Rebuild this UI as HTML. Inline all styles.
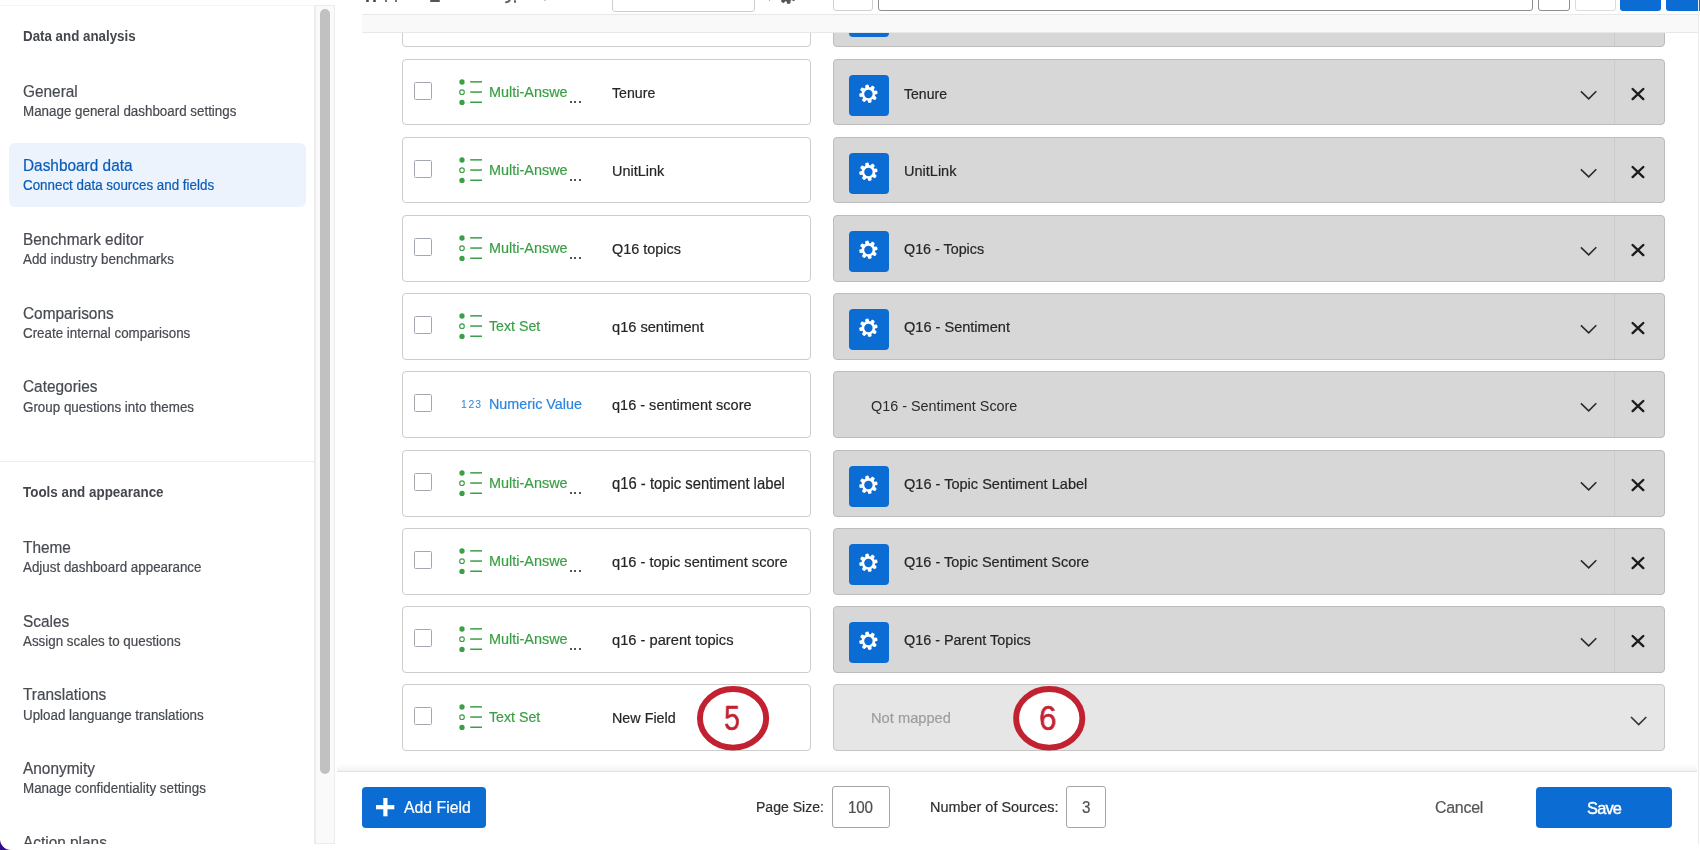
<!DOCTYPE html><html><head><meta charset="utf-8"><style>
html,body{margin:0;padding:0;}
body{width:1700px;height:850px;overflow:hidden;position:relative;background:#fff;font-family:"Liberation Sans",sans-serif;}
.t{position:absolute;white-space:nowrap;will-change:transform;}
.b{position:absolute;box-sizing:border-box;}
svg{position:absolute;overflow:visible;}
</style></head><body>
<div class="b" style="left:0px;top:826px;width:30px;height:24px;background:#300c88;border-radius:0px;"></div>
<div class="b" style="left:0px;top:0px;width:1700px;height:850px;background:#ffffff;border-radius:0px;border-bottom-left-radius:11px;"></div>
<div class="b" style="left:402px;top:-20px;width:409px;height:67px;background:#fff;border:1px solid #cdcdcd;border-radius:4px;"></div>
<div class="b" style="left:414px;top:3px;width:18px;height:18px;background:#fff;border:1.6px solid #a2a7b0;border-radius:1.5px;"></div>
<svg style="left:456px;top:-1px" width="30" height="28" viewBox="0 0 30 28"><circle cx="6" cy="4" r="2.65" fill="#3a9f45"/><circle cx="6" cy="14.2" r="2.3" fill="none" stroke="#3a9f45" stroke-width="1.1"/><circle cx="6" cy="24.4" r="2.65" fill="#3a9f45"/><rect x="14.2" y="3.1" width="11.8" height="1.5" fill="#3a9f45"/><rect x="14.2" y="13.3" width="11.8" height="1.5" fill="#3a9f45"/><rect x="14.2" y="23.5" width="11.8" height="1.5" fill="#3a9f45"/></svg>
<div class="t" style="left:488.50px;top:5.77px;font-size:14.45px;line-height:14.45px;color:#3a9f45;font-weight:400;letter-spacing:0px;transform:scaleY(1.06);transform-origin:0 12.23px;-webkit-text-stroke:0.2px #3a9f45;">Multi-Answe</div>
<div class="b" style="left:569.5px;top:21.5px;width:2.0px;height:2.0px;background:#1a1a1a;border-radius:1px;"></div>
<div class="b" style="left:574.0px;top:21.5px;width:2.0px;height:2.0px;background:#1a1a1a;border-radius:1px;"></div>
<div class="b" style="left:578.5px;top:21.5px;width:2.0px;height:2.0px;background:#1a1a1a;border-radius:1px;"></div>
<div class="b" style="left:833px;top:-20px;width:832px;height:67px;background:#d7d7d7;border:1px solid #bcbcbc;border-radius:4px;"></div>
<div class="b" style="left:1614px;top:-19px;width:1px;height:65px;background:#cbcbcb;border-radius:0px;"></div>
<div class="b" style="left:849px;top:-4.5px;width:40px;height:41px;background:#0b6dd3;border-radius:4px;"></div>
<svg style="left:849px;top:-4.5px" width="40" height="40" viewBox="0 0 40 40"><path fill="#fff" fill-rule="evenodd" d="M16.36,12.83 L16.20,10.71 L16.77,9.98 L18.85,9.62 L19.64,10.10 L20.22,12.15 L20.53,12.20 L20.85,12.26 L21.16,12.34 L21.47,12.43 L22.86,10.82 L23.78,10.71 L25.51,11.92 L25.72,12.82 L24.68,14.68 L24.87,14.93 L25.05,15.20 L25.22,15.48 L25.37,15.76 L27.49,15.60 L28.22,16.17 L28.58,18.25 L28.10,19.04 L26.05,19.62 L26.00,19.93 L25.94,20.25 L25.86,20.56 L25.77,20.87 L27.38,22.26 L27.49,23.18 L26.28,24.91 L25.38,25.12 L23.52,24.08 L23.27,24.27 L23.00,24.45 L22.72,24.62 L22.44,24.77 L22.60,26.89 L22.03,27.62 L19.95,27.98 L19.16,27.50 L18.58,25.45 L18.27,25.40 L17.95,25.34 L17.64,25.26 L17.33,25.17 L15.94,26.78 L15.02,26.89 L13.29,25.68 L13.08,24.78 L14.12,22.92 L13.93,22.67 L13.75,22.40 L13.58,22.12 L13.43,21.84 L11.31,22.00 L10.58,21.43 L10.22,19.35 L10.70,18.56 L12.75,17.98 L12.80,17.67 L12.86,17.35 L12.94,17.04 L13.03,16.73 L11.42,15.34 L11.31,14.42 L12.52,12.69 L13.42,12.48 L15.28,13.52 L15.53,13.33 L15.80,13.15 L16.08,12.98 Z M23.6,19.0 A4.2,4.2 0 1 0 15.2,19.0 A4.2,4.2 0 1 0 23.6,19.0 Z"/></svg>
<div class="t" style="left:903.50px;top:7.32px;font-size:14.5px;line-height:14.5px;color:#262626;font-weight:400;letter-spacing:0px;transform:scaleY(1.06);transform-origin:0 12.28px;-webkit-text-stroke:0.2px #262626;"></div>
<svg style="left:1579px;top:11px" width="18" height="10" viewBox="0 0 18 10"><polyline points="1.9,1.4 9.7,8.8 17.3,1.2" fill="none" stroke="#2a2a2a" stroke-width="1.6"/></svg>
<svg style="left:1630px;top:8px" width="16" height="14" viewBox="0 0 16 14"><path d="M2.6,2.0 L13.3,12.1 M13.3,2.0 L2.6,12.1" stroke="#1c1c1c" stroke-width="2.4" stroke-linecap="round"/></svg>
<div class="b" style="left:402px;top:59px;width:409px;height:66px;background:#fff;border:1px solid #cdcdcd;border-radius:4px;"></div>
<div class="b" style="left:414px;top:82px;width:18px;height:18px;background:#fff;border:1.6px solid #a2a7b0;border-radius:1.5px;"></div>
<svg style="left:456px;top:78px" width="30" height="28" viewBox="0 0 30 28"><circle cx="6" cy="4" r="2.65" fill="#3a9f45"/><circle cx="6" cy="14.2" r="2.3" fill="none" stroke="#3a9f45" stroke-width="1.1"/><circle cx="6" cy="24.4" r="2.65" fill="#3a9f45"/><rect x="14.2" y="3.1" width="11.8" height="1.5" fill="#3a9f45"/><rect x="14.2" y="13.3" width="11.8" height="1.5" fill="#3a9f45"/><rect x="14.2" y="23.5" width="11.8" height="1.5" fill="#3a9f45"/></svg>
<div class="t" style="left:488.50px;top:84.77px;font-size:14.45px;line-height:14.45px;color:#3a9f45;font-weight:400;letter-spacing:0px;transform:scaleY(1.06);transform-origin:0 12.23px;-webkit-text-stroke:0.2px #3a9f45;">Multi-Answe</div>
<div class="b" style="left:569.5px;top:100.5px;width:2.0px;height:2.0px;background:#1a1a1a;border-radius:1px;"></div>
<div class="b" style="left:574.0px;top:100.5px;width:2.0px;height:2.0px;background:#1a1a1a;border-radius:1px;"></div>
<div class="b" style="left:578.5px;top:100.5px;width:2.0px;height:2.0px;background:#1a1a1a;border-radius:1px;"></div>
<div class="t" style="left:611.80px;top:86.31px;font-size:14.16px;line-height:14.16px;color:#262626;font-weight:400;letter-spacing:0px;transform:scaleY(1.06);transform-origin:0 11.99px;-webkit-text-stroke:0.2px #262626;">Tenure</div>
<div class="b" style="left:833px;top:59px;width:832px;height:66px;background:#d7d7d7;border:1px solid #bcbcbc;border-radius:4px;"></div>
<div class="b" style="left:1614px;top:60px;width:1px;height:64px;background:#cbcbcb;border-radius:0px;"></div>
<div class="b" style="left:849px;top:74.5px;width:40px;height:41px;background:#0b6dd3;border-radius:4px;"></div>
<svg style="left:849px;top:74.5px" width="40" height="40" viewBox="0 0 40 40"><path fill="#fff" fill-rule="evenodd" d="M16.36,12.83 L16.20,10.71 L16.77,9.98 L18.85,9.62 L19.64,10.10 L20.22,12.15 L20.53,12.20 L20.85,12.26 L21.16,12.34 L21.47,12.43 L22.86,10.82 L23.78,10.71 L25.51,11.92 L25.72,12.82 L24.68,14.68 L24.87,14.93 L25.05,15.20 L25.22,15.48 L25.37,15.76 L27.49,15.60 L28.22,16.17 L28.58,18.25 L28.10,19.04 L26.05,19.62 L26.00,19.93 L25.94,20.25 L25.86,20.56 L25.77,20.87 L27.38,22.26 L27.49,23.18 L26.28,24.91 L25.38,25.12 L23.52,24.08 L23.27,24.27 L23.00,24.45 L22.72,24.62 L22.44,24.77 L22.60,26.89 L22.03,27.62 L19.95,27.98 L19.16,27.50 L18.58,25.45 L18.27,25.40 L17.95,25.34 L17.64,25.26 L17.33,25.17 L15.94,26.78 L15.02,26.89 L13.29,25.68 L13.08,24.78 L14.12,22.92 L13.93,22.67 L13.75,22.40 L13.58,22.12 L13.43,21.84 L11.31,22.00 L10.58,21.43 L10.22,19.35 L10.70,18.56 L12.75,17.98 L12.80,17.67 L12.86,17.35 L12.94,17.04 L13.03,16.73 L11.42,15.34 L11.31,14.42 L12.52,12.69 L13.42,12.48 L15.28,13.52 L15.53,13.33 L15.80,13.15 L16.08,12.98 Z M23.6,19.0 A4.2,4.2 0 1 0 15.2,19.0 A4.2,4.2 0 1 0 23.6,19.0 Z"/></svg>
<div class="t" style="left:903.50px;top:86.70px;font-size:14.06px;line-height:14.06px;color:#262626;font-weight:400;letter-spacing:0px;transform:scaleY(1.06);transform-origin:0 11.90px;-webkit-text-stroke:0.2px #262626;">Tenure</div>
<svg style="left:1579px;top:90px" width="18" height="10" viewBox="0 0 18 10"><polyline points="1.9,1.4 9.7,8.8 17.3,1.2" fill="none" stroke="#2a2a2a" stroke-width="1.6"/></svg>
<svg style="left:1630px;top:87px" width="16" height="14" viewBox="0 0 16 14"><path d="M2.6,2.0 L13.3,12.1 M13.3,2.0 L2.6,12.1" stroke="#1c1c1c" stroke-width="2.4" stroke-linecap="round"/></svg>
<div class="b" style="left:402px;top:137px;width:409px;height:66px;background:#fff;border:1px solid #cdcdcd;border-radius:4px;"></div>
<div class="b" style="left:414px;top:160px;width:18px;height:18px;background:#fff;border:1.6px solid #a2a7b0;border-radius:1.5px;"></div>
<svg style="left:456px;top:156px" width="30" height="28" viewBox="0 0 30 28"><circle cx="6" cy="4" r="2.65" fill="#3a9f45"/><circle cx="6" cy="14.2" r="2.3" fill="none" stroke="#3a9f45" stroke-width="1.1"/><circle cx="6" cy="24.4" r="2.65" fill="#3a9f45"/><rect x="14.2" y="3.1" width="11.8" height="1.5" fill="#3a9f45"/><rect x="14.2" y="13.3" width="11.8" height="1.5" fill="#3a9f45"/><rect x="14.2" y="23.5" width="11.8" height="1.5" fill="#3a9f45"/></svg>
<div class="t" style="left:488.50px;top:162.77px;font-size:14.45px;line-height:14.45px;color:#3a9f45;font-weight:400;letter-spacing:0px;transform:scaleY(1.06);transform-origin:0 12.23px;-webkit-text-stroke:0.2px #3a9f45;">Multi-Answe</div>
<div class="b" style="left:569.5px;top:178.5px;width:2.0px;height:2.0px;background:#1a1a1a;border-radius:1px;"></div>
<div class="b" style="left:574.0px;top:178.5px;width:2.0px;height:2.0px;background:#1a1a1a;border-radius:1px;"></div>
<div class="b" style="left:578.5px;top:178.5px;width:2.0px;height:2.0px;background:#1a1a1a;border-radius:1px;"></div>
<div class="t" style="left:611.80px;top:164.07px;font-size:14.45px;line-height:14.45px;color:#262626;font-weight:400;letter-spacing:0px;transform:scaleY(1.06);transform-origin:0 12.23px;-webkit-text-stroke:0.2px #262626;">UnitLink</div>
<div class="b" style="left:833px;top:137px;width:832px;height:66px;background:#d7d7d7;border:1px solid #bcbcbc;border-radius:4px;"></div>
<div class="b" style="left:1614px;top:138px;width:1px;height:64px;background:#cbcbcb;border-radius:0px;"></div>
<div class="b" style="left:849px;top:152.5px;width:40px;height:41px;background:#0b6dd3;border-radius:4px;"></div>
<svg style="left:849px;top:152.5px" width="40" height="40" viewBox="0 0 40 40"><path fill="#fff" fill-rule="evenodd" d="M16.36,12.83 L16.20,10.71 L16.77,9.98 L18.85,9.62 L19.64,10.10 L20.22,12.15 L20.53,12.20 L20.85,12.26 L21.16,12.34 L21.47,12.43 L22.86,10.82 L23.78,10.71 L25.51,11.92 L25.72,12.82 L24.68,14.68 L24.87,14.93 L25.05,15.20 L25.22,15.48 L25.37,15.76 L27.49,15.60 L28.22,16.17 L28.58,18.25 L28.10,19.04 L26.05,19.62 L26.00,19.93 L25.94,20.25 L25.86,20.56 L25.77,20.87 L27.38,22.26 L27.49,23.18 L26.28,24.91 L25.38,25.12 L23.52,24.08 L23.27,24.27 L23.00,24.45 L22.72,24.62 L22.44,24.77 L22.60,26.89 L22.03,27.62 L19.95,27.98 L19.16,27.50 L18.58,25.45 L18.27,25.40 L17.95,25.34 L17.64,25.26 L17.33,25.17 L15.94,26.78 L15.02,26.89 L13.29,25.68 L13.08,24.78 L14.12,22.92 L13.93,22.67 L13.75,22.40 L13.58,22.12 L13.43,21.84 L11.31,22.00 L10.58,21.43 L10.22,19.35 L10.70,18.56 L12.75,17.98 L12.80,17.67 L12.86,17.35 L12.94,17.04 L13.03,16.73 L11.42,15.34 L11.31,14.42 L12.52,12.69 L13.42,12.48 L15.28,13.52 L15.53,13.33 L15.80,13.15 L16.08,12.98 Z M23.6,19.0 A4.2,4.2 0 1 0 15.2,19.0 A4.2,4.2 0 1 0 23.6,19.0 Z"/></svg>
<div class="t" style="left:903.50px;top:164.30px;font-size:14.53px;line-height:14.53px;color:#262626;font-weight:400;letter-spacing:0px;transform:scaleY(1.06);transform-origin:0 12.30px;-webkit-text-stroke:0.2px #262626;">UnitLink</div>
<svg style="left:1579px;top:168px" width="18" height="10" viewBox="0 0 18 10"><polyline points="1.9,1.4 9.7,8.8 17.3,1.2" fill="none" stroke="#2a2a2a" stroke-width="1.6"/></svg>
<svg style="left:1630px;top:165px" width="16" height="14" viewBox="0 0 16 14"><path d="M2.6,2.0 L13.3,12.1 M13.3,2.0 L2.6,12.1" stroke="#1c1c1c" stroke-width="2.4" stroke-linecap="round"/></svg>
<div class="b" style="left:402px;top:215px;width:409px;height:67px;background:#fff;border:1px solid #cdcdcd;border-radius:4px;"></div>
<div class="b" style="left:414px;top:238px;width:18px;height:18px;background:#fff;border:1.6px solid #a2a7b0;border-radius:1.5px;"></div>
<svg style="left:456px;top:234px" width="30" height="28" viewBox="0 0 30 28"><circle cx="6" cy="4" r="2.65" fill="#3a9f45"/><circle cx="6" cy="14.2" r="2.3" fill="none" stroke="#3a9f45" stroke-width="1.1"/><circle cx="6" cy="24.4" r="2.65" fill="#3a9f45"/><rect x="14.2" y="3.1" width="11.8" height="1.5" fill="#3a9f45"/><rect x="14.2" y="13.3" width="11.8" height="1.5" fill="#3a9f45"/><rect x="14.2" y="23.5" width="11.8" height="1.5" fill="#3a9f45"/></svg>
<div class="t" style="left:488.50px;top:240.77px;font-size:14.45px;line-height:14.45px;color:#3a9f45;font-weight:400;letter-spacing:0px;transform:scaleY(1.06);transform-origin:0 12.23px;-webkit-text-stroke:0.2px #3a9f45;">Multi-Answe</div>
<div class="b" style="left:569.5px;top:256.5px;width:2.0px;height:2.0px;background:#1a1a1a;border-radius:1px;"></div>
<div class="b" style="left:574.0px;top:256.5px;width:2.0px;height:2.0px;background:#1a1a1a;border-radius:1px;"></div>
<div class="b" style="left:578.5px;top:256.5px;width:2.0px;height:2.0px;background:#1a1a1a;border-radius:1px;"></div>
<div class="t" style="left:611.80px;top:242.10px;font-size:14.41px;line-height:14.41px;color:#262626;font-weight:400;letter-spacing:0px;transform:scaleY(1.06);transform-origin:0 12.20px;-webkit-text-stroke:0.2px #262626;">Q16 topics</div>
<div class="b" style="left:833px;top:215px;width:832px;height:67px;background:#d7d7d7;border:1px solid #bcbcbc;border-radius:4px;"></div>
<div class="b" style="left:1614px;top:216px;width:1px;height:65px;background:#cbcbcb;border-radius:0px;"></div>
<div class="b" style="left:849px;top:230.5px;width:40px;height:41px;background:#0b6dd3;border-radius:4px;"></div>
<svg style="left:849px;top:230.5px" width="40" height="40" viewBox="0 0 40 40"><path fill="#fff" fill-rule="evenodd" d="M16.36,12.83 L16.20,10.71 L16.77,9.98 L18.85,9.62 L19.64,10.10 L20.22,12.15 L20.53,12.20 L20.85,12.26 L21.16,12.34 L21.47,12.43 L22.86,10.82 L23.78,10.71 L25.51,11.92 L25.72,12.82 L24.68,14.68 L24.87,14.93 L25.05,15.20 L25.22,15.48 L25.37,15.76 L27.49,15.60 L28.22,16.17 L28.58,18.25 L28.10,19.04 L26.05,19.62 L26.00,19.93 L25.94,20.25 L25.86,20.56 L25.77,20.87 L27.38,22.26 L27.49,23.18 L26.28,24.91 L25.38,25.12 L23.52,24.08 L23.27,24.27 L23.00,24.45 L22.72,24.62 L22.44,24.77 L22.60,26.89 L22.03,27.62 L19.95,27.98 L19.16,27.50 L18.58,25.45 L18.27,25.40 L17.95,25.34 L17.64,25.26 L17.33,25.17 L15.94,26.78 L15.02,26.89 L13.29,25.68 L13.08,24.78 L14.12,22.92 L13.93,22.67 L13.75,22.40 L13.58,22.12 L13.43,21.84 L11.31,22.00 L10.58,21.43 L10.22,19.35 L10.70,18.56 L12.75,17.98 L12.80,17.67 L12.86,17.35 L12.94,17.04 L13.03,16.73 L11.42,15.34 L11.31,14.42 L12.52,12.69 L13.42,12.48 L15.28,13.52 L15.53,13.33 L15.80,13.15 L16.08,12.98 Z M23.6,19.0 A4.2,4.2 0 1 0 15.2,19.0 A4.2,4.2 0 1 0 23.6,19.0 Z"/></svg>
<div class="t" style="left:903.50px;top:242.48px;font-size:14.32px;line-height:14.32px;color:#262626;font-weight:400;letter-spacing:0px;transform:scaleY(1.06);transform-origin:0 12.12px;-webkit-text-stroke:0.2px #262626;">Q16 - Topics</div>
<svg style="left:1579px;top:246px" width="18" height="10" viewBox="0 0 18 10"><polyline points="1.9,1.4 9.7,8.8 17.3,1.2" fill="none" stroke="#2a2a2a" stroke-width="1.6"/></svg>
<svg style="left:1630px;top:243px" width="16" height="14" viewBox="0 0 16 14"><path d="M2.6,2.0 L13.3,12.1 M13.3,2.0 L2.6,12.1" stroke="#1c1c1c" stroke-width="2.4" stroke-linecap="round"/></svg>
<div class="b" style="left:402px;top:293px;width:409px;height:67px;background:#fff;border:1px solid #cdcdcd;border-radius:4px;"></div>
<div class="b" style="left:414px;top:316px;width:18px;height:18px;background:#fff;border:1.6px solid #a2a7b0;border-radius:1.5px;"></div>
<svg style="left:456px;top:312px" width="30" height="28" viewBox="0 0 30 28"><circle cx="6" cy="4" r="2.65" fill="#3a9f45"/><circle cx="6" cy="14.2" r="2.3" fill="none" stroke="#3a9f45" stroke-width="1.1"/><circle cx="6" cy="24.4" r="2.65" fill="#3a9f45"/><rect x="14.2" y="3.1" width="11.8" height="1.5" fill="#3a9f45"/><rect x="14.2" y="13.3" width="11.8" height="1.5" fill="#3a9f45"/><rect x="14.2" y="23.5" width="11.8" height="1.5" fill="#3a9f45"/></svg>
<div class="t" style="left:488.50px;top:319.08px;font-size:14.2px;line-height:14.2px;color:#3a9f45;font-weight:400;letter-spacing:0px;transform:scaleY(1.06);transform-origin:0 12.02px;-webkit-text-stroke:0.2px #3a9f45;">Text Set</div>
<div class="t" style="left:611.80px;top:319.93px;font-size:14.61px;line-height:14.61px;color:#262626;font-weight:400;letter-spacing:0px;transform:scaleY(1.06);transform-origin:0 12.37px;-webkit-text-stroke:0.2px #262626;">q16 sentiment</div>
<div class="b" style="left:833px;top:293px;width:832px;height:67px;background:#d7d7d7;border:1px solid #bcbcbc;border-radius:4px;"></div>
<div class="b" style="left:1614px;top:294px;width:1px;height:65px;background:#cbcbcb;border-radius:0px;"></div>
<div class="b" style="left:849px;top:308.5px;width:40px;height:41px;background:#0b6dd3;border-radius:4px;"></div>
<svg style="left:849px;top:308.5px" width="40" height="40" viewBox="0 0 40 40"><path fill="#fff" fill-rule="evenodd" d="M16.36,12.83 L16.20,10.71 L16.77,9.98 L18.85,9.62 L19.64,10.10 L20.22,12.15 L20.53,12.20 L20.85,12.26 L21.16,12.34 L21.47,12.43 L22.86,10.82 L23.78,10.71 L25.51,11.92 L25.72,12.82 L24.68,14.68 L24.87,14.93 L25.05,15.20 L25.22,15.48 L25.37,15.76 L27.49,15.60 L28.22,16.17 L28.58,18.25 L28.10,19.04 L26.05,19.62 L26.00,19.93 L25.94,20.25 L25.86,20.56 L25.77,20.87 L27.38,22.26 L27.49,23.18 L26.28,24.91 L25.38,25.12 L23.52,24.08 L23.27,24.27 L23.00,24.45 L22.72,24.62 L22.44,24.77 L22.60,26.89 L22.03,27.62 L19.95,27.98 L19.16,27.50 L18.58,25.45 L18.27,25.40 L17.95,25.34 L17.64,25.26 L17.33,25.17 L15.94,26.78 L15.02,26.89 L13.29,25.68 L13.08,24.78 L14.12,22.92 L13.93,22.67 L13.75,22.40 L13.58,22.12 L13.43,21.84 L11.31,22.00 L10.58,21.43 L10.22,19.35 L10.70,18.56 L12.75,17.98 L12.80,17.67 L12.86,17.35 L12.94,17.04 L13.03,16.73 L11.42,15.34 L11.31,14.42 L12.52,12.69 L13.42,12.48 L15.28,13.52 L15.53,13.33 L15.80,13.15 L16.08,12.98 Z M23.6,19.0 A4.2,4.2 0 1 0 15.2,19.0 A4.2,4.2 0 1 0 23.6,19.0 Z"/></svg>
<div class="t" style="left:903.50px;top:320.27px;font-size:14.56px;line-height:14.56px;color:#262626;font-weight:400;letter-spacing:0px;transform:scaleY(1.06);transform-origin:0 12.33px;-webkit-text-stroke:0.2px #262626;">Q16 - Sentiment</div>
<svg style="left:1579px;top:324px" width="18" height="10" viewBox="0 0 18 10"><polyline points="1.9,1.4 9.7,8.8 17.3,1.2" fill="none" stroke="#2a2a2a" stroke-width="1.6"/></svg>
<svg style="left:1630px;top:321px" width="16" height="14" viewBox="0 0 16 14"><path d="M2.6,2.0 L13.3,12.1 M13.3,2.0 L2.6,12.1" stroke="#1c1c1c" stroke-width="2.4" stroke-linecap="round"/></svg>
<div class="b" style="left:402px;top:371px;width:409px;height:67px;background:#fff;border:1px solid #cdcdcd;border-radius:4px;"></div>
<div class="b" style="left:414px;top:394px;width:18px;height:18px;background:#fff;border:1.6px solid #a2a7b0;border-radius:1.5px;"></div>
<div class="t" style="left:460.60px;top:400.39px;font-size:10.4px;line-height:10.4px;color:#2b86dd;font-weight:400;letter-spacing:0px;transform:scaleY(1.06);transform-origin:0 8.81px;">1<span style="margin-left:1.6px">2</span><span style="margin-left:1.2px">3</span></div>
<div class="t" style="left:488.50px;top:396.96px;font-size:14.34px;line-height:14.34px;color:#2b86dd;font-weight:400;letter-spacing:0px;transform:scaleY(1.06);transform-origin:0 12.14px;-webkit-text-stroke:0.2px #2b86dd;">Numeric Value</div>
<div class="t" style="left:611.80px;top:398.01px;font-size:14.52px;line-height:14.52px;color:#262626;font-weight:400;letter-spacing:0px;transform:scaleY(1.06);transform-origin:0 12.29px;-webkit-text-stroke:0.2px #262626;">q16 - sentiment score</div>
<div class="b" style="left:833px;top:371px;width:832px;height:67px;background:#d7d7d7;border:1px solid #bcbcbc;border-radius:4px;"></div>
<div class="b" style="left:1614px;top:372px;width:1px;height:65px;background:#cbcbcb;border-radius:0px;"></div>
<div class="t" style="left:870.50px;top:399.41px;font-size:14.4px;line-height:14.4px;color:#2a2a2a;font-weight:400;letter-spacing:0px;transform:scaleY(1.06);transform-origin:0 12.19px;">Q16 - Sentiment Score</div>
<svg style="left:1579px;top:402px" width="18" height="10" viewBox="0 0 18 10"><polyline points="1.9,1.4 9.7,8.8 17.3,1.2" fill="none" stroke="#2a2a2a" stroke-width="1.6"/></svg>
<svg style="left:1630px;top:399px" width="16" height="14" viewBox="0 0 16 14"><path d="M2.6,2.0 L13.3,12.1 M13.3,2.0 L2.6,12.1" stroke="#1c1c1c" stroke-width="2.4" stroke-linecap="round"/></svg>
<div class="b" style="left:402px;top:450px;width:409px;height:67px;background:#fff;border:1px solid #cdcdcd;border-radius:4px;"></div>
<div class="b" style="left:414px;top:473px;width:18px;height:18px;background:#fff;border:1.6px solid #a2a7b0;border-radius:1.5px;"></div>
<svg style="left:456px;top:469px" width="30" height="28" viewBox="0 0 30 28"><circle cx="6" cy="4" r="2.65" fill="#3a9f45"/><circle cx="6" cy="14.2" r="2.3" fill="none" stroke="#3a9f45" stroke-width="1.1"/><circle cx="6" cy="24.4" r="2.65" fill="#3a9f45"/><rect x="14.2" y="3.1" width="11.8" height="1.5" fill="#3a9f45"/><rect x="14.2" y="13.3" width="11.8" height="1.5" fill="#3a9f45"/><rect x="14.2" y="23.5" width="11.8" height="1.5" fill="#3a9f45"/></svg>
<div class="t" style="left:488.50px;top:475.77px;font-size:14.45px;line-height:14.45px;color:#3a9f45;font-weight:400;letter-spacing:0px;transform:scaleY(1.06);transform-origin:0 12.23px;-webkit-text-stroke:0.2px #3a9f45;">Multi-Answe</div>
<div class="b" style="left:569.5px;top:491.5px;width:2.0px;height:2.0px;background:#1a1a1a;border-radius:1px;"></div>
<div class="b" style="left:574.0px;top:491.5px;width:2.0px;height:2.0px;background:#1a1a1a;border-radius:1px;"></div>
<div class="b" style="left:578.5px;top:491.5px;width:2.0px;height:2.0px;background:#1a1a1a;border-radius:1px;"></div>
<div class="t" style="left:611.80px;top:476.75px;font-size:14.82px;line-height:14.82px;color:#262626;font-weight:400;letter-spacing:0px;transform:scaleY(1.06);transform-origin:0 12.55px;-webkit-text-stroke:0.2px #262626;">q16 - topic sentiment label</div>
<div class="b" style="left:833px;top:450px;width:832px;height:67px;background:#d7d7d7;border:1px solid #bcbcbc;border-radius:4px;"></div>
<div class="b" style="left:1614px;top:451px;width:1px;height:65px;background:#cbcbcb;border-radius:0px;"></div>
<div class="b" style="left:849px;top:465.5px;width:40px;height:41px;background:#0b6dd3;border-radius:4px;"></div>
<svg style="left:849px;top:465.5px" width="40" height="40" viewBox="0 0 40 40"><path fill="#fff" fill-rule="evenodd" d="M16.36,12.83 L16.20,10.71 L16.77,9.98 L18.85,9.62 L19.64,10.10 L20.22,12.15 L20.53,12.20 L20.85,12.26 L21.16,12.34 L21.47,12.43 L22.86,10.82 L23.78,10.71 L25.51,11.92 L25.72,12.82 L24.68,14.68 L24.87,14.93 L25.05,15.20 L25.22,15.48 L25.37,15.76 L27.49,15.60 L28.22,16.17 L28.58,18.25 L28.10,19.04 L26.05,19.62 L26.00,19.93 L25.94,20.25 L25.86,20.56 L25.77,20.87 L27.38,22.26 L27.49,23.18 L26.28,24.91 L25.38,25.12 L23.52,24.08 L23.27,24.27 L23.00,24.45 L22.72,24.62 L22.44,24.77 L22.60,26.89 L22.03,27.62 L19.95,27.98 L19.16,27.50 L18.58,25.45 L18.27,25.40 L17.95,25.34 L17.64,25.26 L17.33,25.17 L15.94,26.78 L15.02,26.89 L13.29,25.68 L13.08,24.78 L14.12,22.92 L13.93,22.67 L13.75,22.40 L13.58,22.12 L13.43,21.84 L11.31,22.00 L10.58,21.43 L10.22,19.35 L10.70,18.56 L12.75,17.98 L12.80,17.67 L12.86,17.35 L12.94,17.04 L13.03,16.73 L11.42,15.34 L11.31,14.42 L12.52,12.69 L13.42,12.48 L15.28,13.52 L15.53,13.33 L15.80,13.15 L16.08,12.98 Z M23.6,19.0 A4.2,4.2 0 1 0 15.2,19.0 A4.2,4.2 0 1 0 23.6,19.0 Z"/></svg>
<div class="t" style="left:903.50px;top:477.28px;font-size:14.55px;line-height:14.55px;color:#262626;font-weight:400;letter-spacing:0px;transform:scaleY(1.06);transform-origin:0 12.32px;-webkit-text-stroke:0.2px #262626;">Q16 - Topic Sentiment Label</div>
<svg style="left:1579px;top:481px" width="18" height="10" viewBox="0 0 18 10"><polyline points="1.9,1.4 9.7,8.8 17.3,1.2" fill="none" stroke="#2a2a2a" stroke-width="1.6"/></svg>
<svg style="left:1630px;top:478px" width="16" height="14" viewBox="0 0 16 14"><path d="M2.6,2.0 L13.3,12.1 M13.3,2.0 L2.6,12.1" stroke="#1c1c1c" stroke-width="2.4" stroke-linecap="round"/></svg>
<div class="b" style="left:402px;top:528px;width:409px;height:67px;background:#fff;border:1px solid #cdcdcd;border-radius:4px;"></div>
<div class="b" style="left:414px;top:551px;width:18px;height:18px;background:#fff;border:1.6px solid #a2a7b0;border-radius:1.5px;"></div>
<svg style="left:456px;top:547px" width="30" height="28" viewBox="0 0 30 28"><circle cx="6" cy="4" r="2.65" fill="#3a9f45"/><circle cx="6" cy="14.2" r="2.3" fill="none" stroke="#3a9f45" stroke-width="1.1"/><circle cx="6" cy="24.4" r="2.65" fill="#3a9f45"/><rect x="14.2" y="3.1" width="11.8" height="1.5" fill="#3a9f45"/><rect x="14.2" y="13.3" width="11.8" height="1.5" fill="#3a9f45"/><rect x="14.2" y="23.5" width="11.8" height="1.5" fill="#3a9f45"/></svg>
<div class="t" style="left:488.50px;top:553.77px;font-size:14.45px;line-height:14.45px;color:#3a9f45;font-weight:400;letter-spacing:0px;transform:scaleY(1.06);transform-origin:0 12.23px;-webkit-text-stroke:0.2px #3a9f45;">Multi-Answe</div>
<div class="b" style="left:569.5px;top:569.5px;width:2.0px;height:2.0px;background:#1a1a1a;border-radius:1px;"></div>
<div class="b" style="left:574.0px;top:569.5px;width:2.0px;height:2.0px;background:#1a1a1a;border-radius:1px;"></div>
<div class="b" style="left:578.5px;top:569.5px;width:2.0px;height:2.0px;background:#1a1a1a;border-radius:1px;"></div>
<div class="t" style="left:611.80px;top:554.91px;font-size:14.63px;line-height:14.63px;color:#262626;font-weight:400;letter-spacing:0px;transform:scaleY(1.06);transform-origin:0 12.39px;-webkit-text-stroke:0.2px #262626;">q16 - topic sentiment score</div>
<div class="b" style="left:833px;top:528px;width:832px;height:67px;background:#d7d7d7;border:1px solid #bcbcbc;border-radius:4px;"></div>
<div class="b" style="left:1614px;top:529px;width:1px;height:65px;background:#cbcbcb;border-radius:0px;"></div>
<div class="b" style="left:849px;top:543.5px;width:40px;height:41px;background:#0b6dd3;border-radius:4px;"></div>
<svg style="left:849px;top:543.5px" width="40" height="40" viewBox="0 0 40 40"><path fill="#fff" fill-rule="evenodd" d="M16.36,12.83 L16.20,10.71 L16.77,9.98 L18.85,9.62 L19.64,10.10 L20.22,12.15 L20.53,12.20 L20.85,12.26 L21.16,12.34 L21.47,12.43 L22.86,10.82 L23.78,10.71 L25.51,11.92 L25.72,12.82 L24.68,14.68 L24.87,14.93 L25.05,15.20 L25.22,15.48 L25.37,15.76 L27.49,15.60 L28.22,16.17 L28.58,18.25 L28.10,19.04 L26.05,19.62 L26.00,19.93 L25.94,20.25 L25.86,20.56 L25.77,20.87 L27.38,22.26 L27.49,23.18 L26.28,24.91 L25.38,25.12 L23.52,24.08 L23.27,24.27 L23.00,24.45 L22.72,24.62 L22.44,24.77 L22.60,26.89 L22.03,27.62 L19.95,27.98 L19.16,27.50 L18.58,25.45 L18.27,25.40 L17.95,25.34 L17.64,25.26 L17.33,25.17 L15.94,26.78 L15.02,26.89 L13.29,25.68 L13.08,24.78 L14.12,22.92 L13.93,22.67 L13.75,22.40 L13.58,22.12 L13.43,21.84 L11.31,22.00 L10.58,21.43 L10.22,19.35 L10.70,18.56 L12.75,17.98 L12.80,17.67 L12.86,17.35 L12.94,17.04 L13.03,16.73 L11.42,15.34 L11.31,14.42 L12.52,12.69 L13.42,12.48 L15.28,13.52 L15.53,13.33 L15.80,13.15 L16.08,12.98 Z M23.6,19.0 A4.2,4.2 0 1 0 15.2,19.0 A4.2,4.2 0 1 0 23.6,19.0 Z"/></svg>
<div class="t" style="left:903.50px;top:555.31px;font-size:14.51px;line-height:14.51px;color:#262626;font-weight:400;letter-spacing:0px;transform:scaleY(1.06);transform-origin:0 12.29px;-webkit-text-stroke:0.2px #262626;">Q16 - Topic Sentiment Score</div>
<svg style="left:1579px;top:559px" width="18" height="10" viewBox="0 0 18 10"><polyline points="1.9,1.4 9.7,8.8 17.3,1.2" fill="none" stroke="#2a2a2a" stroke-width="1.6"/></svg>
<svg style="left:1630px;top:556px" width="16" height="14" viewBox="0 0 16 14"><path d="M2.6,2.0 L13.3,12.1 M13.3,2.0 L2.6,12.1" stroke="#1c1c1c" stroke-width="2.4" stroke-linecap="round"/></svg>
<div class="b" style="left:402px;top:606px;width:409px;height:67px;background:#fff;border:1px solid #cdcdcd;border-radius:4px;"></div>
<div class="b" style="left:414px;top:629px;width:18px;height:18px;background:#fff;border:1.6px solid #a2a7b0;border-radius:1.5px;"></div>
<svg style="left:456px;top:625px" width="30" height="28" viewBox="0 0 30 28"><circle cx="6" cy="4" r="2.65" fill="#3a9f45"/><circle cx="6" cy="14.2" r="2.3" fill="none" stroke="#3a9f45" stroke-width="1.1"/><circle cx="6" cy="24.4" r="2.65" fill="#3a9f45"/><rect x="14.2" y="3.1" width="11.8" height="1.5" fill="#3a9f45"/><rect x="14.2" y="13.3" width="11.8" height="1.5" fill="#3a9f45"/><rect x="14.2" y="23.5" width="11.8" height="1.5" fill="#3a9f45"/></svg>
<div class="t" style="left:488.50px;top:631.77px;font-size:14.45px;line-height:14.45px;color:#3a9f45;font-weight:400;letter-spacing:0px;transform:scaleY(1.06);transform-origin:0 12.23px;-webkit-text-stroke:0.2px #3a9f45;">Multi-Answe</div>
<div class="b" style="left:569.5px;top:647.5px;width:2.0px;height:2.0px;background:#1a1a1a;border-radius:1px;"></div>
<div class="b" style="left:574.0px;top:647.5px;width:2.0px;height:2.0px;background:#1a1a1a;border-radius:1px;"></div>
<div class="b" style="left:578.5px;top:647.5px;width:2.0px;height:2.0px;background:#1a1a1a;border-radius:1px;"></div>
<div class="t" style="left:611.80px;top:632.87px;font-size:14.68px;line-height:14.68px;color:#262626;font-weight:400;letter-spacing:0px;transform:scaleY(1.06);transform-origin:0 12.43px;-webkit-text-stroke:0.2px #262626;">q16 - parent topics</div>
<div class="b" style="left:833px;top:606px;width:832px;height:67px;background:#d7d7d7;border:1px solid #bcbcbc;border-radius:4px;"></div>
<div class="b" style="left:1614px;top:607px;width:1px;height:65px;background:#cbcbcb;border-radius:0px;"></div>
<div class="b" style="left:849px;top:621.5px;width:40px;height:41px;background:#0b6dd3;border-radius:4px;"></div>
<svg style="left:849px;top:621.5px" width="40" height="40" viewBox="0 0 40 40"><path fill="#fff" fill-rule="evenodd" d="M16.36,12.83 L16.20,10.71 L16.77,9.98 L18.85,9.62 L19.64,10.10 L20.22,12.15 L20.53,12.20 L20.85,12.26 L21.16,12.34 L21.47,12.43 L22.86,10.82 L23.78,10.71 L25.51,11.92 L25.72,12.82 L24.68,14.68 L24.87,14.93 L25.05,15.20 L25.22,15.48 L25.37,15.76 L27.49,15.60 L28.22,16.17 L28.58,18.25 L28.10,19.04 L26.05,19.62 L26.00,19.93 L25.94,20.25 L25.86,20.56 L25.77,20.87 L27.38,22.26 L27.49,23.18 L26.28,24.91 L25.38,25.12 L23.52,24.08 L23.27,24.27 L23.00,24.45 L22.72,24.62 L22.44,24.77 L22.60,26.89 L22.03,27.62 L19.95,27.98 L19.16,27.50 L18.58,25.45 L18.27,25.40 L17.95,25.34 L17.64,25.26 L17.33,25.17 L15.94,26.78 L15.02,26.89 L13.29,25.68 L13.08,24.78 L14.12,22.92 L13.93,22.67 L13.75,22.40 L13.58,22.12 L13.43,21.84 L11.31,22.00 L10.58,21.43 L10.22,19.35 L10.70,18.56 L12.75,17.98 L12.80,17.67 L12.86,17.35 L12.94,17.04 L13.03,16.73 L11.42,15.34 L11.31,14.42 L12.52,12.69 L13.42,12.48 L15.28,13.52 L15.53,13.33 L15.80,13.15 L16.08,12.98 Z M23.6,19.0 A4.2,4.2 0 1 0 15.2,19.0 A4.2,4.2 0 1 0 23.6,19.0 Z"/></svg>
<div class="t" style="left:903.50px;top:633.42px;font-size:14.38px;line-height:14.38px;color:#262626;font-weight:400;letter-spacing:0px;transform:scaleY(1.06);transform-origin:0 12.18px;-webkit-text-stroke:0.2px #262626;">Q16 - Parent Topics</div>
<svg style="left:1579px;top:637px" width="18" height="10" viewBox="0 0 18 10"><polyline points="1.9,1.4 9.7,8.8 17.3,1.2" fill="none" stroke="#2a2a2a" stroke-width="1.6"/></svg>
<svg style="left:1630px;top:634px" width="16" height="14" viewBox="0 0 16 14"><path d="M2.6,2.0 L13.3,12.1 M13.3,2.0 L2.6,12.1" stroke="#1c1c1c" stroke-width="2.4" stroke-linecap="round"/></svg>
<div class="b" style="left:402px;top:684px;width:409px;height:67px;background:#fff;border:1px solid #cdcdcd;border-radius:4px;"></div>
<div class="b" style="left:414px;top:707px;width:18px;height:18px;background:#fff;border:1.6px solid #a2a7b0;border-radius:1.5px;"></div>
<svg style="left:456px;top:703px" width="30" height="28" viewBox="0 0 30 28"><circle cx="6" cy="4" r="2.65" fill="#3a9f45"/><circle cx="6" cy="14.2" r="2.3" fill="none" stroke="#3a9f45" stroke-width="1.1"/><circle cx="6" cy="24.4" r="2.65" fill="#3a9f45"/><rect x="14.2" y="3.1" width="11.8" height="1.5" fill="#3a9f45"/><rect x="14.2" y="13.3" width="11.8" height="1.5" fill="#3a9f45"/><rect x="14.2" y="23.5" width="11.8" height="1.5" fill="#3a9f45"/></svg>
<div class="t" style="left:488.50px;top:710.08px;font-size:14.2px;line-height:14.2px;color:#3a9f45;font-weight:400;letter-spacing:0px;transform:scaleY(1.06);transform-origin:0 12.02px;-webkit-text-stroke:0.2px #3a9f45;">Text Set</div>
<div class="t" style="left:611.80px;top:711.17px;font-size:14.33px;line-height:14.33px;color:#262626;font-weight:400;letter-spacing:0px;transform:scaleY(1.06);transform-origin:0 12.13px;-webkit-text-stroke:0.2px #262626;">New Field</div>
<div class="b" style="left:833px;top:684px;width:832px;height:67px;background:#e6e6e6;border:1px solid #c5c5c5;border-radius:4px;"></div>
<div class="t" style="left:870.50px;top:711.07px;font-size:14.68px;line-height:14.68px;color:#9d9d9d;font-weight:400;letter-spacing:0px;transform:scaleY(1.06);transform-origin:0 12.43px;-webkit-text-stroke:0.2px #9d9d9d;">Not mapped</div>
<svg style="left:1630px;top:716px" width="18" height="10" viewBox="0 0 18 10"><polyline points="1,1 8.7,8.6 16.3,1" fill="none" stroke="#333" stroke-width="1.6"/></svg>
<svg style="left:690px;top:680px" width="90" height="80" viewBox="0 0 90 80"><ellipse cx="43.05" cy="38.35" rx="33.1" ry="29.3" fill="#fff" stroke="#c22131" stroke-width="5.9"/></svg>
<div class="t" style="left:724.20px;top:700.84px;font-size:34.2px;line-height:34.2px;color:#c22131;font-weight:400;letter-spacing:0px;-webkit-text-stroke:0.5px #c22131;transform:scaleX(0.84);transform-origin:0 0;">5</div>
<svg style="left:1005px;top:680px" width="90" height="80" viewBox="0 0 90 80"><ellipse cx="44.25" cy="38.35" rx="33.1" ry="29.3" fill="#fff" stroke="#c22131" stroke-width="5.9"/></svg>
<div class="t" style="left:1039.40px;top:700.84px;font-size:34.2px;line-height:34.2px;color:#c22131;font-weight:400;letter-spacing:0px;-webkit-text-stroke:0.5px #c22131;transform:scaleX(0.92);transform-origin:0 0;">6</div>
<div class="b" style="left:335px;top:0px;width:1363px;height:14px;background:#fff;border-radius:0px;"></div>
<div class="b" style="left:366px;top:0px;width:3px;height:2px;background:#444;border-radius:1px;"></div>
<div class="b" style="left:373px;top:0px;width:3px;height:2px;background:#444;border-radius:1px;"></div>
<div class="b" style="left:385px;top:0px;width:2px;height:2px;background:#444;border-radius:1px;"></div>
<div class="b" style="left:395px;top:0px;width:2px;height:2px;background:#444;border-radius:1px;"></div>
<div class="b" style="left:430px;top:0px;width:10px;height:2px;background:#555;border-radius:1px;"></div>
<svg style="left:504px;top:-3px" width="8" height="7" viewBox="0 0 8 7"><path d="M6.5,0 C6.2,3 5,5.2 2,5.2" stroke="#666" stroke-width="2" fill="none" stroke-linecap="round"/></svg>
<div class="b" style="left:514px;top:0px;width:2px;height:2.8px;background:#666;border-radius:1px;"></div>
<div class="b" style="left:544px;top:0px;width:2px;height:1px;background:#ccc;border-radius:0px;"></div>
<div class="b" style="left:612px;top:-5px;width:143px;height:17px;background:#fff;border:1px solid #cfcfcf;border-radius:3px;"></div>
<div class="b" style="left:769px;top:0px;width:1px;height:1px;background:#aaa;border-radius:0px;"></div>
<svg style="left:768px;top:-24px" width="40" height="40" viewBox="0 0 40 40"><path fill="#555" fill-rule="evenodd" d="M16.36,12.83 L16.20,10.71 L16.77,9.98 L18.85,9.62 L19.64,10.10 L20.22,12.15 L20.53,12.20 L20.85,12.26 L21.16,12.34 L21.47,12.43 L22.86,10.82 L23.78,10.71 L25.51,11.92 L25.72,12.82 L24.68,14.68 L24.87,14.93 L25.05,15.20 L25.22,15.48 L25.37,15.76 L27.49,15.60 L28.22,16.17 L28.58,18.25 L28.10,19.04 L26.05,19.62 L26.00,19.93 L25.94,20.25 L25.86,20.56 L25.77,20.87 L27.38,22.26 L27.49,23.18 L26.28,24.91 L25.38,25.12 L23.52,24.08 L23.27,24.27 L23.00,24.45 L22.72,24.62 L22.44,24.77 L22.60,26.89 L22.03,27.62 L19.95,27.98 L19.16,27.50 L18.58,25.45 L18.27,25.40 L17.95,25.34 L17.64,25.26 L17.33,25.17 L15.94,26.78 L15.02,26.89 L13.29,25.68 L13.08,24.78 L14.12,22.92 L13.93,22.67 L13.75,22.40 L13.58,22.12 L13.43,21.84 L11.31,22.00 L10.58,21.43 L10.22,19.35 L10.70,18.56 L12.75,17.98 L12.80,17.67 L12.86,17.35 L12.94,17.04 L13.03,16.73 L11.42,15.34 L11.31,14.42 L12.52,12.69 L13.42,12.48 L15.28,13.52 L15.53,13.33 L15.80,13.15 L16.08,12.98 Z M23.6,19.0 A4.2,4.2 0 1 0 15.2,19.0 A4.2,4.2 0 1 0 23.6,19.0 Z"/></svg>
<div class="b" style="left:833px;top:-5px;width:40px;height:16px;background:#fff;border:1px solid #cfcfcf;border-radius:3px;"></div>
<div class="b" style="left:878px;top:-5px;width:655px;height:16px;background:#fff;border:1.5px solid #8d8d8d;border-radius:3px;"></div>
<div class="b" style="left:1538px;top:-5px;width:32px;height:16px;background:#fff;border:1.5px solid #8d8d8d;border-radius:3px;"></div>
<div class="b" style="left:1575px;top:-5px;width:41px;height:16px;background:#fff;border:1px solid #dcdcdc;border-radius:3px;"></div>
<div class="b" style="left:1620px;top:-5px;width:41px;height:16px;background:#0b6dd3;border-radius:3px;"></div>
<div class="b" style="left:1666px;top:-5px;width:40px;height:16px;background:#0b6dd3;border-radius:3px;"></div>
<div class="b" style="left:362px;top:14px;width:1336px;height:19px;background:#f9f9f9;border:1px solid #e8e8e8;border-radius:0px;border-left:none;border-right:none;"></div>
<div class="b" style="left:337px;top:764px;width:1360px;height:7px;background:linear-gradient(to bottom, rgba(0,0,0,0), rgba(0,0,0,0.05));"></div>
<div class="b" style="left:337px;top:771px;width:1360px;height:1px;background:#e2e2e2;border-radius:0px;"></div>
<div class="b" style="left:337px;top:772px;width:1361px;height:72px;background:#fff;border-radius:0px;"></div>
<div class="b" style="left:362px;top:787px;width:124px;height:41px;background:#0b6dd3;border-radius:4px;"></div>
<svg style="left:375.7px;top:798px" width="19" height="19" viewBox="0 0 19 19"><rect x="7.3" y="0" width="4.2" height="18.3" fill="#fff"/><rect x="0" y="7.1" width="18.3" height="4.2" fill="#fff"/></svg>
<div class="t" style="left:404.40px;top:800.02px;font-size:15.8px;line-height:15.8px;color:#fff;font-weight:400;letter-spacing:0px;transform:scaleY(1.06);transform-origin:0 13.38px;-webkit-text-stroke:0.2px #fff;">Add Field</div>
<div class="t" style="left:756.40px;top:799.90px;font-size:14.06px;line-height:14.06px;color:#2f2f2f;font-weight:400;letter-spacing:0px;transform:scaleY(1.06);transform-origin:0 11.90px;-webkit-text-stroke:0.2px #2f2f2f;">Page Size:</div>
<div class="b" style="left:832px;top:786px;width:58px;height:42px;background:#fff;border:1px solid #a5a5a5;border-radius:3px;"></div>
<div class="t" style="left:847.50px;top:800.33px;font-size:15.2px;line-height:15.2px;color:#505050;font-weight:400;letter-spacing:-0.2px;transform:scaleY(1.06);transform-origin:0 12.87px;-webkit-text-stroke:0.2px #505050;">100</div>
<div class="t" style="left:929.60px;top:799.57px;font-size:14.45px;line-height:14.45px;color:#2f2f2f;font-weight:400;letter-spacing:0px;transform:scaleY(1.06);transform-origin:0 12.23px;-webkit-text-stroke:0.2px #2f2f2f;">Number of Sources:</div>
<div class="b" style="left:1066px;top:786px;width:40px;height:42px;background:#fff;border:1px solid #a5a5a5;border-radius:3px;"></div>
<div class="t" style="left:1081.80px;top:800.33px;font-size:15.2px;line-height:15.2px;color:#505050;font-weight:400;letter-spacing:0px;transform:scaleY(1.06);transform-origin:0 12.87px;-webkit-text-stroke:0.2px #505050;">3</div>
<div class="t" style="left:1434.60px;top:800.05px;font-size:16px;line-height:16px;color:#555;font-weight:400;letter-spacing:-0.3px;transform:scaleY(1.06);transform-origin:0 13.55px;-webkit-text-stroke:0.2px #555;">Cancel</div>
<div class="b" style="left:1536px;top:787px;width:136px;height:41px;background:#0b6dd3;border-radius:4px;"></div>
<div class="t" style="left:1586.50px;top:799.91px;font-size:16.4px;line-height:16.4px;color:#fff;font-weight:400;letter-spacing:-0.8px;transform:scaleY(1.06);transform-origin:0 13.89px;-webkit-text-stroke:0.4px #fff;">Save</div>
<div class="b" style="left:1698px;top:0px;width:1px;height:844px;background:#ececec;border-radius:0px;"></div>
<div class="b" style="left:0px;top:0px;width:335px;height:850px;background:transparent;border-radius:0px;"></div>
<div class="b" style="left:0px;top:5px;width:315px;height:839px;background:#fff;border-radius:0px;border-right:1px solid #ececec;"></div>
<div class="b" style="left:315px;top:5px;width:20px;height:839px;background:#fafafa;border:1px solid #ececec;border-radius:0px;"></div>
<div class="b" style="left:320px;top:9px;width:10px;height:765px;background:#c1c1c1;border-radius:5px;"></div>
<div class="b" style="left:9px;top:143px;width:297px;height:64px;background:#ecf3fc;border-radius:6px;"></div>
<div class="b" style="left:0px;top:5px;width:315px;height:1px;background:#f4f4f4;border-radius:0px;"></div>
<div class="t" style="left:23.40px;top:29.91px;font-size:13.34px;line-height:13.34px;color:#43474c;font-weight:700;letter-spacing:0px;transform:scaleY(1.06);transform-origin:0 11.29px;">Data and analysis</div>
<div class="t" style="left:23.30px;top:83.96px;font-size:15.4px;line-height:15.4px;color:#474b51;font-weight:400;letter-spacing:0px;transform:scaleY(1.06);transform-origin:0 13.04px;-webkit-text-stroke:0.2px #474b51;">General</div>
<div class="t" style="left:23.30px;top:105.27px;font-size:13.38px;line-height:13.38px;color:#474b51;font-weight:400;letter-spacing:0px;transform:scaleY(1.06);transform-origin:0 11.33px;-webkit-text-stroke:0.2px #474b51;">Manage general dashboard settings</div>
<div class="t" style="left:23.30px;top:157.81px;font-size:15.4px;line-height:15.4px;color:#0b5cb8;font-weight:400;letter-spacing:0px;transform:scaleY(1.06);transform-origin:0 13.04px;-webkit-text-stroke:0.2px #0b5cb8;">Dashboard data</div>
<div class="t" style="left:23.30px;top:179.12px;font-size:13.38px;line-height:13.38px;color:#0b5cb8;font-weight:400;letter-spacing:0px;transform:scaleY(1.06);transform-origin:0 11.33px;-webkit-text-stroke:0.2px #0b5cb8;">Connect data sources and fields</div>
<div class="t" style="left:23.30px;top:231.66px;font-size:15.4px;line-height:15.4px;color:#474b51;font-weight:400;letter-spacing:0px;transform:scaleY(1.06);transform-origin:0 13.04px;-webkit-text-stroke:0.2px #474b51;">Benchmark editor</div>
<div class="t" style="left:23.30px;top:252.97px;font-size:13.38px;line-height:13.38px;color:#474b51;font-weight:400;letter-spacing:0px;transform:scaleY(1.06);transform-origin:0 11.33px;-webkit-text-stroke:0.2px #474b51;">Add industry benchmarks</div>
<div class="t" style="left:23.30px;top:305.51px;font-size:15.4px;line-height:15.4px;color:#474b51;font-weight:400;letter-spacing:0px;transform:scaleY(1.06);transform-origin:0 13.04px;-webkit-text-stroke:0.2px #474b51;">Comparisons</div>
<div class="t" style="left:23.30px;top:326.82px;font-size:13.38px;line-height:13.38px;color:#474b51;font-weight:400;letter-spacing:0px;transform:scaleY(1.06);transform-origin:0 11.33px;-webkit-text-stroke:0.2px #474b51;">Create internal comparisons</div>
<div class="t" style="left:23.30px;top:379.36px;font-size:15.4px;line-height:15.4px;color:#474b51;font-weight:400;letter-spacing:0px;transform:scaleY(1.06);transform-origin:0 13.04px;-webkit-text-stroke:0.2px #474b51;">Categories</div>
<div class="t" style="left:23.30px;top:400.67px;font-size:13.38px;line-height:13.38px;color:#474b51;font-weight:400;letter-spacing:0px;transform:scaleY(1.06);transform-origin:0 11.33px;-webkit-text-stroke:0.2px #474b51;">Group questions into themes</div>
<div class="b" style="left:0px;top:461px;width:315px;height:1px;background:#ededed;border-radius:0px;"></div>
<div class="t" style="left:23.40px;top:485.55px;font-size:13.41px;line-height:13.41px;color:#43474c;font-weight:700;letter-spacing:0px;transform:scaleY(1.06);transform-origin:0 11.35px;">Tools and appearance</div>
<div class="t" style="left:23.30px;top:539.96px;font-size:15.4px;line-height:15.4px;color:#474b51;font-weight:400;letter-spacing:0px;transform:scaleY(1.06);transform-origin:0 13.04px;-webkit-text-stroke:0.2px #474b51;">Theme</div>
<div class="t" style="left:23.30px;top:561.27px;font-size:13.38px;line-height:13.38px;color:#474b51;font-weight:400;letter-spacing:0px;transform:scaleY(1.06);transform-origin:0 11.33px;-webkit-text-stroke:0.2px #474b51;">Adjust dashboard appearance</div>
<div class="t" style="left:23.30px;top:613.66px;font-size:15.4px;line-height:15.4px;color:#474b51;font-weight:400;letter-spacing:0px;transform:scaleY(1.06);transform-origin:0 13.04px;-webkit-text-stroke:0.2px #474b51;">Scales</div>
<div class="t" style="left:23.30px;top:634.97px;font-size:13.38px;line-height:13.38px;color:#474b51;font-weight:400;letter-spacing:0px;transform:scaleY(1.06);transform-origin:0 11.33px;-webkit-text-stroke:0.2px #474b51;">Assign scales to questions</div>
<div class="t" style="left:23.30px;top:687.36px;font-size:15.4px;line-height:15.4px;color:#474b51;font-weight:400;letter-spacing:0px;transform:scaleY(1.06);transform-origin:0 13.04px;-webkit-text-stroke:0.2px #474b51;">Translations</div>
<div class="t" style="left:23.30px;top:708.67px;font-size:13.38px;line-height:13.38px;color:#474b51;font-weight:400;letter-spacing:0px;transform:scaleY(1.06);transform-origin:0 11.33px;-webkit-text-stroke:0.2px #474b51;">Upload languange translations</div>
<div class="t" style="left:23.30px;top:761.06px;font-size:15.4px;line-height:15.4px;color:#474b51;font-weight:400;letter-spacing:0px;transform:scaleY(1.06);transform-origin:0 13.04px;-webkit-text-stroke:0.2px #474b51;">Anonymity</div>
<div class="t" style="left:23.30px;top:782.37px;font-size:13.38px;line-height:13.38px;color:#474b51;font-weight:400;letter-spacing:0px;transform:scaleY(1.06);transform-origin:0 11.33px;-webkit-text-stroke:0.2px #474b51;">Manage confidentiality settings</div>
<div class="t" style="left:23.30px;top:834.76px;font-size:15.4px;line-height:15.4px;color:#474b51;font-weight:400;letter-spacing:0px;transform:scaleY(1.06);transform-origin:0 13.04px;-webkit-text-stroke:0.2px #474b51;">Action plans</div>
<div class="b" style="left:0px;top:844px;width:315px;height:6px;background:#fff;border-radius:0px;border-bottom-left-radius:0;"></div>
<div class="b" style="left:0px;top:838px;width:12px;height:12px;background:#300c88;border-radius:0px;"></div>
<div class="b" style="left:0;top:826px;width:24px;height:24px;background:#fff;border-bottom-left-radius:11px;"></div>
</body></html>
